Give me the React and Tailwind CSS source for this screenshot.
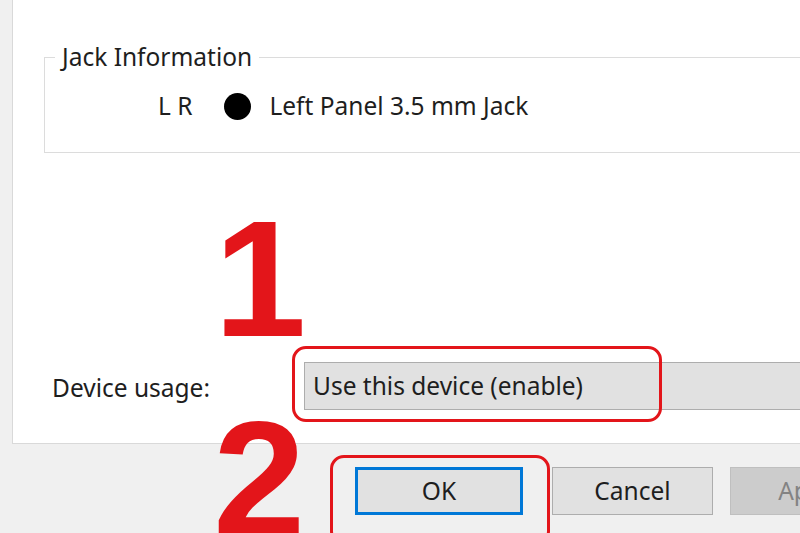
import React from "react";

const font = { fontFamily: "'Noto Sans', 'Open Sans', sans-serif" };
const digit = { fontFamily: "'Liberation Sans', Arial, sans-serif" };

export default function App() {
  return (
    <div className="relative w-[800px] h-[533px] overflow-hidden bg-[#f0f0f0] text-[#1e1e1e]" style={font}>
      {/* Tab page */}
      <div className="ml-[12px] w-[800px] h-[444px] pt-[43px] flex flex-col bg-white border-l border-b border-[#d9d9d9]">
        <fieldset className="ml-[31px] w-[800px] h-[110px] shrink-0 border border-[#dcdcdc] px-[10px]">
          <legend className="px-[7px] text-[24.5px] leading-[28px]">Jack Information</legend>
          <div className="mt-[21px] ml-[103px] flex items-center text-[24.5px] leading-[28px]">
            <span>L R</span>
            <span className="ml-[32px] w-[27px] h-[27px] rounded-full bg-black" />
            <span className="ml-[18px]">Left Panel 3.5 mm Jack</span>
          </div>
        </fieldset>

        <div className="mt-[209px] flex items-center h-[48px] text-[24.5px]">
          <span className="ml-[39px] w-[252px] shrink-0 pt-[4px]">Device usage:</span>
          <div className="flex items-center w-[600px] h-[48px] shrink-0 bg-[#e1e1e1] border border-[#adadad] pl-[8px]">
            Use this device (enable)
          </div>
        </div>
      </div>

      {/* Buttons */}
      <div className="mt-[23px] pl-[355px] flex text-[24.5px]">
        <div className="flex items-center justify-center w-[168px] h-[48px] shrink-0 bg-[#e1e1e1] border-[3px] border-[#0078d7]">OK</div>
        <div className="ml-[29px] flex items-center justify-center w-[161px] h-[48px] shrink-0 bg-[#e1e1e1] border border-[#adadad]">Cancel</div>
        <div className="ml-[17px] flex items-center justify-center w-[161px] h-[48px] shrink-0 bg-[#cccccc] border border-[#bfbfbf] text-[#838383]">Apply</div>
      </div>

      {/* Annotations */}
      <div className="absolute left-[292px] top-[346px] w-[370px] h-[76px] rounded-[14px] border-[3px] border-[#e3151a]" />
      <div className="absolute left-[330px] top-[455px] w-[220px] h-[90px] rounded-[14px] border-[3px] border-[#e3151a]" />
      <span className="absolute left-[214px] top-[196px] text-[166px] leading-none font-bold text-[#e3151a]" style={digit}>
        1
      </span>
      <span className="absolute left-[213px] top-[396px] text-[166px] leading-none font-bold text-[#e3151a]" style={digit}>
        2
      </span>
    </div>
  );
}
